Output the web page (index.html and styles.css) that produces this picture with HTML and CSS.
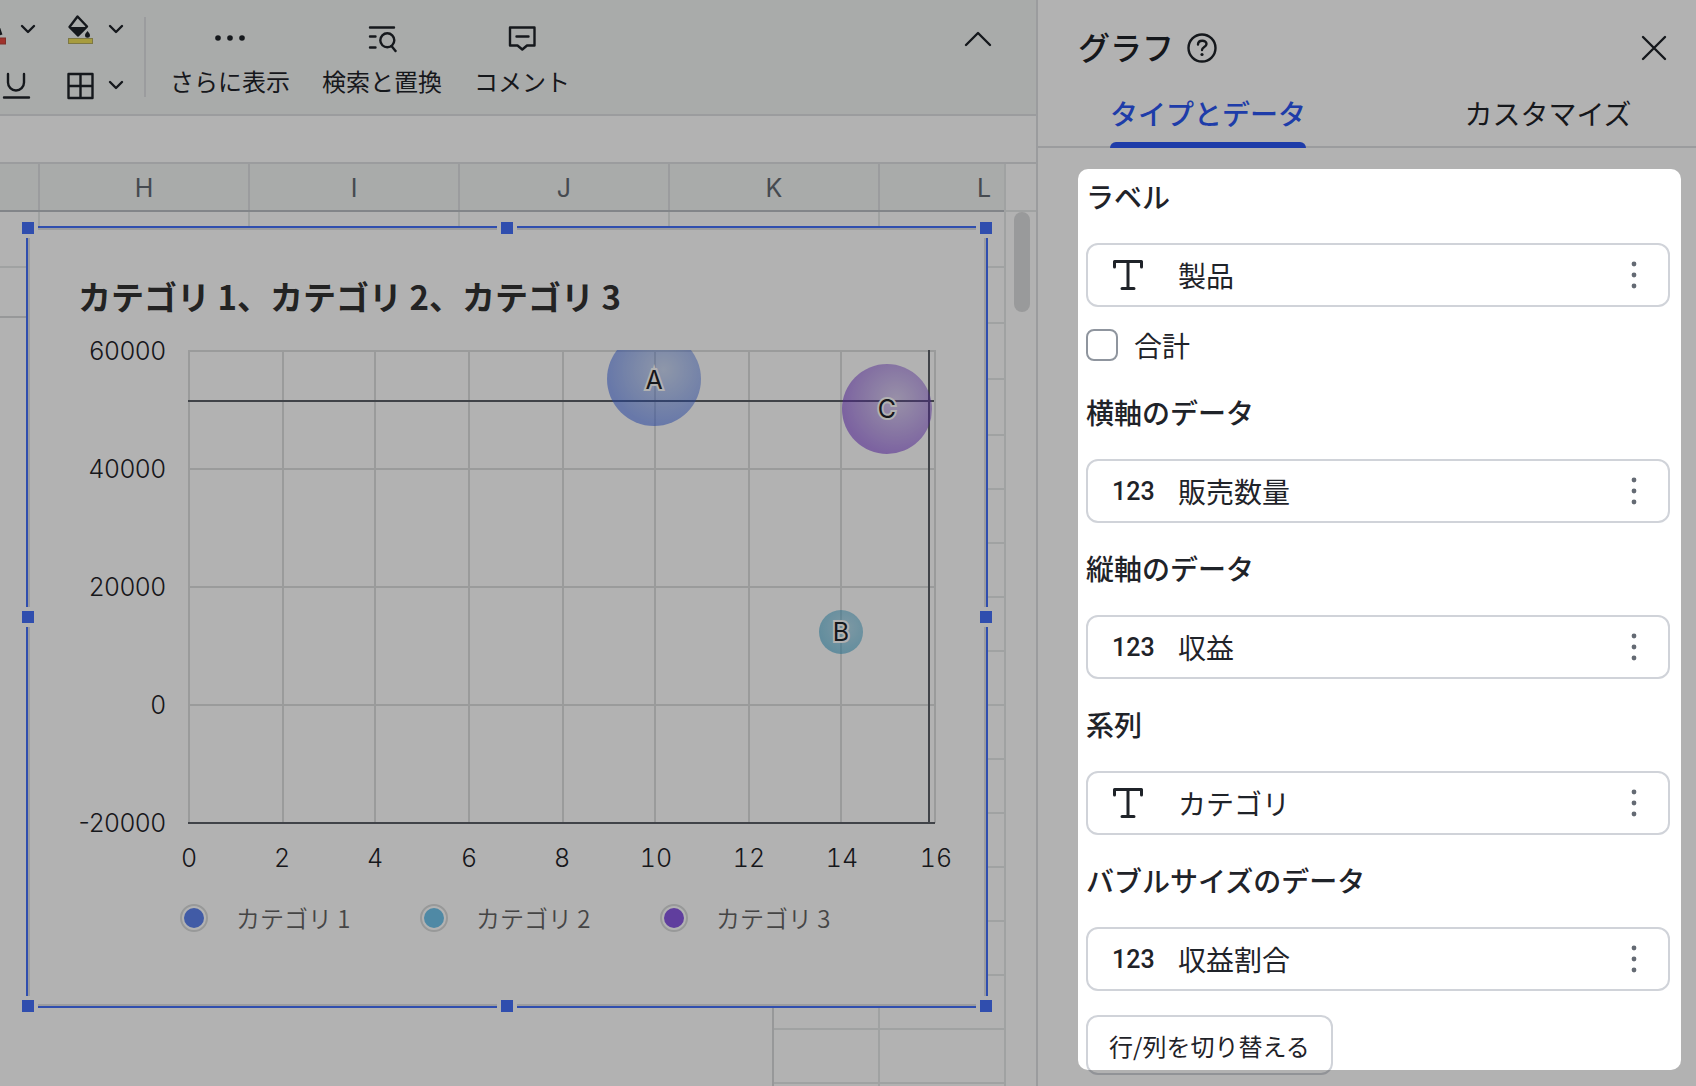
FILE: index.html
```html
<!DOCTYPE html>
<html lang="ja">
<head>
  <meta charset="UTF-8" />
  <meta name="viewport" content="width=device-width, initial-scale=1" />
  <title>グラフ</title>
  <link rel="stylesheet" href="styles.css">
</head>
<body>
  <div class="app">
    <main class="workspace">
      <div class="toolbar">
        <div class="tool-grid">
          <button class="tool" aria-label="文字の色">
            <svg width="10" height="32" viewBox="0 0 10 32"><path d="M-5 4 1 22" fill="none" stroke="#1f2329" stroke-width="3"/><rect x="-10" y="25" width="15.500" height="6" fill="#e5483f" stroke="#b5443c"/></svg>
          </button>
          <button class="tool" aria-label="文字の色を選択">
            <svg width="16" height="16" viewBox="0 0 16 16"><path d="m2 5 6 6 6-6" class="line"/></svg>
          </button>
          <button class="tool" aria-label="塗りつぶし">
            <svg width="32" height="32" viewBox="0 0 32 32"><path d="M13.500 3.500 23 13.500 14 22.500 5.500 14z" class="line"/><path d="M5 14h18.500L14 23.500z" fill="#1f2329"/><path d="M23.500 18c1.800 2.400 2.500 3.200 2.500 4.200a2.500 2.500 0 0 1-5 0c0-1 .700-1.800 2.500-4.200z" fill="#1f2329"/><rect x="4.500" y="25.500" width="24" height="5" fill="#f0e05a" stroke="#b3ac62"/></svg>
          </button>
          <button class="tool" aria-label="塗りつぶしの色を選択">
            <svg width="16" height="16" viewBox="0 0 16 16"><path d="m2 5 6 6 6-6" class="line"/></svg>
          </button>
          <button class="tool underline" aria-label="下線">
            <svg width="32" height="32" viewBox="0 0 32 32"><path d="M8 5v8.500a8 8 0 0 0 16 0V5M4 28.500h25" class="line"/></svg>
          </button>
          <button class="tool" aria-label="枠線">
            <svg width="32" height="32" viewBox="0 0 32 32"><path d="M4.500 5h24v24h-24zM16.500 5v24M4.500 17h24" class="line"/></svg>
          </button>
          <button class="tool" aria-label="枠線を選択">
            <svg width="16" height="16" viewBox="0 0 16 16"><path d="m2 5 6 6 6-6" class="line"/></svg>
          </button>
        </div>
        <span class="divider"></span>
        <button class="tool-item">
          <svg width="32" height="32" viewBox="0 0 32 32" fill="#1f2329"><circle cx="4" cy="17" r="2.800"/><circle cx="16" cy="17" r="2.800"/><circle cx="28" cy="17" r="2.800"/></svg>
          さらに表示
        </button>
        <button class="tool-item">
          <svg width="32" height="32" viewBox="0 0 32 32"><path d="M4 6.500h24M4 15.500h5.500M4 26.500h5.500" class="line"/><circle cx="21.300" cy="19.300" r="7" class="line"/><path d="m25.500 25 4 5" class="line"/></svg>
          検索と置換
        </button>
        <button class="tool-item">
          <svg width="32" height="32" viewBox="0 0 32 32"><path d="M4 6.500h24.500v18H21l-4.700 4-4.800-4H4zM10.500 15.500h12" class="line"/></svg>
          コメント
        </button>
        <button class="tool collapse" aria-label="折りたたむ">
          <svg width="32" height="32" viewBox="0 0 32 32"><path d="m4 23 12-12 12 12" class="line"/></svg>
        </button>
      </div>

      <div class="formula-bar"></div>

      <div class="sheet">
        <div class="sheet-main">
          <div class="columns">
            <span class="column-first"></span>
            <span>H</span>
            <span>I</span>
            <span>J</span>
            <span>K</span>
            <span>L</span>
          </div>
          <div class="cells">
            <svg class="grid-lines" width="100%" height="100%">
              <path d="M39 0v20M249 0v20M459 0v20M669 0v20M879 0v20M879 790v100M0 55h30M980 55h24M980 111h24M980 167h24M980 223h24M980 277h24M980 331h24M980 385h24M980 439h24M980 493h24M980 547h24M980 601h24M980 655h24M980 709h24M980 763h24M773 817h231M773 871h231"/>
              <path d="M0 105h30M773 790v100" class="dark"/>
            </svg>

            <section class="chart">
              <h2>カテゴリ 1、カテゴリ 2、カテゴリ 3</h2>
              <svg class="plot" viewBox="0 0 958 530" role="img" aria-label="バブルチャート">
                <defs>
                  <radialGradient id="blue" cx="0.6" cy="0.4" r="0.6"><stop offset="0" stop-color="#3366d2" stop-opacity="0.25"/><stop offset="1" stop-color="#3360e6" stop-opacity="0.52"/></radialGradient>
                  <radialGradient id="teal" cx="0.6" cy="0.4" r="0.6"><stop offset="0" stop-color="#46a5cd" stop-opacity="0.4"/><stop offset="1" stop-color="#3ca5cd" stop-opacity="0.58"/></radialGradient>
                  <radialGradient id="purple" cx="0.6" cy="0.4" r="0.6"><stop offset="0" stop-color="#6e41c8" stop-opacity="0.25"/><stop offset="1" stop-color="#7332d2" stop-opacity="0.55"/></radialGradient>
                  <clipPath id="plot-area"><rect x="160" y="20" width="748" height="474"/></clipPath>
                </defs>
                <path class="grid" d="M160 21h748M160 139h748M160 257h748M160 375h748M161 20v473M255 20v473M347 20v473M441 20v473M535 20v473M627 20v473M721 20v473M813 20v473M907 20v473"/>
                <path class="axis" d="M160 71h746M901 20v473M160 493h747"/>
                <g clip-path="url(#plot-area)">
                  <circle cx="626" cy="49" r="47" fill="url(#blue)"/>
                  <circle cx="859" cy="79" r="45" fill="url(#purple)"/>
                  <circle cx="813" cy="302" r="22" fill="url(#teal)"/>
                </g>
                <g class="bubble-label">
                  <text x="626" y="59">A</text>
                  <text x="859" y="88">C</text>
                  <text x="813" y="311">B</text>
                </g>
                <g class="y-label">
                  <text x="138" y="30">60000</text>
                  <text x="138" y="148">40000</text>
                  <text x="138" y="266">20000</text>
                  <text x="138" y="384">0</text>
                  <text x="138" y="502">-20000</text>
                </g>
                <g class="x-label">
                  <text x="161" y="537">0</text>
                  <text x="254" y="537">2</text>
                  <text x="347" y="537">4</text>
                  <text x="441" y="537">6</text>
                  <text x="534" y="537">8</text>
                  <text x="628" y="537">10</text>
                  <text x="721" y="537">12</text>
                  <text x="814" y="537">14</text>
                  <text x="908" y="537">16</text>
                </g>
              </svg>
              <ul class="legend">
                <li><span class="marker blue"></span>カテゴリ 1</li>
                <li><span class="marker teal"></span>カテゴリ 2</li>
                <li><span class="marker purple"></span>カテゴリ 3</li>
              </ul>
              <i class="handle top left"></i>
              <i class="handle top center"></i>
              <i class="handle top right"></i>
              <i class="handle middle left"></i>
              <i class="handle middle right"></i>
              <i class="handle bottom left"></i>
              <i class="handle bottom center"></i>
              <i class="handle bottom right"></i>
            </section>
          </div>
        </div>
        <div class="scrollbar">
          <div class="scroll-corner"></div>
          <div class="thumb"></div>
        </div>
      </div>
    </main>

    <aside class="panel">
      <header class="panel-header">
        <h1>グラフ</h1>
        <button class="tool" aria-label="ヘルプ">
          <svg width="32" height="32" viewBox="0 0 32 32"><circle cx="16" cy="16" r="13.500" class="line"/><path d="M12 12.500c0-5 8.500-5 8.500-.5 0 3-4.500 3-4.500 6" class="line"/><circle cx="16" cy="22.500" r="1.600" fill="#1f2329"/></svg>
        </button>
        <button class="tool close" aria-label="閉じる">
          <svg width="32" height="32" viewBox="0 0 32 32"><path d="m5 5 22 22M27 5 5 27" class="line"/></svg>
        </button>
      </header>
      <nav class="tabs">
        <button class="tab active">タイプとデータ</button>
        <button class="tab">カスタマイズ</button>
      </nav>

      <div class="fields">
        <section class="field">
          <h3>ラベル</h3>
          <button class="picker">
            <span class="type"><svg width="32" height="32" viewBox="0 0 32 32"><path d="M2.500 8V2.500h27V8M16 2.500v27M10 29.500h12" class="line thick"/></svg></span>
            <span class="name">製品</span>
            <svg class="more" width="8" height="32" viewBox="0 0 8 32"><circle cx="4" cy="5" r="2.400"/><circle cx="4" cy="16" r="2.400"/><circle cx="4" cy="27" r="2.400"/></svg>
          </button>
          <label class="check"><input type="checkbox" />合計</label>
        </section>
        <section class="field">
          <h3>横軸のデータ</h3>
          <button class="picker">
            <span class="type">123</span>
            <span class="name">販売数量</span>
            <svg class="more" width="8" height="32" viewBox="0 0 8 32"><circle cx="4" cy="5" r="2.400"/><circle cx="4" cy="16" r="2.400"/><circle cx="4" cy="27" r="2.400"/></svg>
          </button>
        </section>
        <section class="field">
          <h3>縦軸のデータ</h3>
          <button class="picker">
            <span class="type">123</span>
            <span class="name">収益</span>
            <svg class="more" width="8" height="32" viewBox="0 0 8 32"><circle cx="4" cy="5" r="2.400"/><circle cx="4" cy="16" r="2.400"/><circle cx="4" cy="27" r="2.400"/></svg>
          </button>
        </section>
        <section class="field">
          <h3>系列</h3>
          <button class="picker">
            <span class="type"><svg width="32" height="32" viewBox="0 0 32 32"><path d="M2.500 8V2.500h27V8M16 2.500v27M10 29.500h12" class="line thick"/></svg></span>
            <span class="name">カテゴリ</span>
            <svg class="more" width="8" height="32" viewBox="0 0 8 32"><circle cx="4" cy="5" r="2.400"/><circle cx="4" cy="16" r="2.400"/><circle cx="4" cy="27" r="2.400"/></svg>
          </button>
        </section>
        <section class="field">
          <h3>バブルサイズのデータ</h3>
          <button class="picker">
            <span class="type">123</span>
            <span class="name">収益割合</span>
            <svg class="more" width="8" height="32" viewBox="0 0 8 32"><circle cx="4" cy="5" r="2.400"/><circle cx="4" cy="16" r="2.400"/><circle cx="4" cy="27" r="2.400"/></svg>
          </button>
        </section>
        <button class="switch">行/列を切り替える</button>
      </div>

      <div class="spotlight"></div>
    </aside>
  </div>
</body>
</html>
```

FILE: styles.css
```css
* {
  box-sizing: border-box;
}

body {
  margin: 0;
  font-family: "Noto Sans CJK JP", sans-serif;
  color: #1f2329;
  background: #fff;
}

h1,
h2,
h3 {
  margin: 0;
}

button {
  font-family: inherit;
  color: inherit;
  background: none;
  border: none;
  padding: 0;
  margin: 0;
}

svg {
  display: block;
  flex: none;
}

.line {
  fill: none;
  stroke: #1f2329;
  stroke-width: 2.4;
  stroke-linecap: round;
  stroke-linejoin: round;
}

.thick {
  stroke-width: 3;
}

.app {
  display: flex;
  height: 100vh;
  overflow: hidden;
}

.workspace {
  flex: 1;
  min-width: 0;
  display: flex;
  flex-direction: column;
}

/* toolbar */
.toolbar {
  flex: none;
  display: flex;
  align-items: center;
  gap: 32px;
  height: 116px;
  padding-right: 42px;
  background: #f2f5f4;
  border-bottom: 2px solid #dee0e3;
}

.tool-grid {
  display: grid;
  grid-template-columns: 20px 44px 44px 16px;
  grid-template-rows: 32px 32px;
  row-gap: 24px;
  align-items: center;
}

.tool {
  display: flex;
}

.underline {
  grid-column: span 2;
}

.divider {
  width: 2px;
  height: 80px;
  margin: 0 -8px 0 -12px;
  background: #dee0e3;
}

.tool-item {
  display: flex;
  flex-direction: column;
  align-items: center;
  gap: 12px;
  padding-top: 4px;
  font-size: 24px;
  line-height: 32px;
  white-space: nowrap;
}

.collapse {
  align-self: flex-start;
  margin: 22px 0 0 auto;
}

.formula-bar {
  flex: none;
  height: 48px;
  border-bottom: 2px solid #dee0e3;
}

/* sheet */
.sheet {
  flex: 1;
  min-height: 0;
  display: flex;
}

.sheet-main {
  flex: 1;
  min-width: 0;
  display: flex;
  flex-direction: column;
  overflow: hidden;
}

.columns {
  flex: none;
  display: flex;
  height: 48px;
  background: #f2f5f4;
  border-bottom: 2px solid #bbbfc4;
  font-family: Inter, sans-serif;
  font-size: 25px;
  line-height: 48px;
  color: #646a73;
  text-align: center;
}

.columns span {
  flex: 0 0 210px;
  border-right: 2px solid #dee0e3;
}

.columns .column-first {
  flex-basis: 40px;
}

.cells {
  flex: 1;
  min-height: 0;
  position: relative;
}

.grid-lines {
  position: absolute;
  inset: 0;
  fill: none;
  stroke: #e6e8e8;
  stroke-width: 2;
}

.grid-lines .dark {
  stroke: #d8dadc;
}

.scrollbar {
  flex: 0 0 32px;
  border-left: 2px solid #e6e8e8;
}

.scroll-corner {
  height: 48px;
  border-bottom: 2px solid #e6e8e8;
}

.thumb {
  width: 16px;
  height: 100px;
  margin-left: 8px;
  border-radius: 8px;
  background: #dcddde;
}

/* floating chart */
.chart {
  position: absolute;
  top: 14px;
  left: 26px;
  right: 16px;
  height: 782px;
  padding-top: 46px;
  background: #fff;
  border: 2px solid #4570fa;
  box-shadow: inset 0 0 0 2px #dee0e3;
}

.chart h2 {
  margin-bottom: 12px;
  padding-left: 50px;
  font-size: 33px;
  line-height: 44px;
  font-weight: 700;
  color: #333;
}

.plot {
  width: 100%;
  overflow: visible;
  font-family: Inter, sans-serif;
  font-size: 25px;
}

.grid {
  fill: none;
  stroke: #82868a;
  stroke-opacity: 0.27;
  stroke-width: 2;
}

.axis {
  fill: none;
  stroke: #5c6068;
  stroke-width: 2;
}

.x-label,
.y-label {
  font-weight: 300;
  fill: #1f2329;
}

.y-label {
  text-anchor: end;
}

.x-label {
  text-anchor: middle;
  font-feature-settings: "tnum";
}

.bubble-label {
  text-anchor: middle;
  fill: #1f2329;
  stroke: #fff;
  stroke-width: 4;
  paint-order: stroke;
}

.legend {
  display: flex;
  list-style: none;
  margin: 42px 0 0;
  padding: 0 0 0 152px;
  font-size: 24px;
  line-height: 32px;
  font-weight: 350;
  color: #646464;
}

.legend li {
  display: flex;
  align-items: center;
  gap: 28px;
  width: 240px;
}

.marker {
  width: 28px;
  height: 28px;
  border: 2px solid #dadcdc;
  border-radius: 50%;
  padding: 2px;
  background-clip: content-box;
}

.marker.blue {
  background-color: #5e83ee;
}

.marker.teal {
  background-color: #71c5ed;
}

.marker.purple {
  background-color: #8a5ae3;
}

.handle {
  position: absolute;
  width: 20px;
  height: 20px;
  background: #4570fa;
  border: 4px solid #fff;
}

.handle.top { top: -10px; }
.handle.middle { top: calc(50% - 10px); }
.handle.bottom { bottom: -10px; }
.handle.left { left: -10px; }
.handle.center { left: calc(50% - 10px); }
.handle.right { right: -10px; }

/* side panel */
.panel {
  flex: 0 0 660px;
  position: relative;
  border-left: 2px solid #dee0e3;
}

.panel-header {
  display: flex;
  align-items: center;
  gap: 12px;
  height: 84px;
  padding: 12px 26px 0 40px;
}

.panel-header h1 {
  padding-bottom: 4px;
  font-size: 32px;
  line-height: 48px;
  font-weight: 500;
}

.close {
  margin-left: auto;
}

.tabs {
  display: flex;
  height: 64px;
  margin-right: -22px;
  border-bottom: 2px solid #dee0e3;
}

.tab {
  flex: 1;
  position: relative;
  padding-bottom: 4px;
  font-size: 28px;
}

.tab.active {
  color: #2c57f2;
  font-weight: 500;
}

.tab.active::after {
  content: "";
  position: absolute;
  left: 50%;
  bottom: -2px;
  width: 196px;
  height: 6px;
  margin-left: -98px;
  border-radius: 6px 6px 0 0;
  background: #2c57f2;
}

.fields {
  display: flex;
  flex-direction: column;
  align-items: flex-start;
  padding: 27px 26px 0 48px;
}

.field {
  width: 100%;
  margin-bottom: 24px;
}

.field h3 {
  margin-bottom: 26px;
  font-size: 28px;
  line-height: 42px;
  font-weight: 500;
}

.picker {
  display: flex;
  align-items: center;
  width: 100%;
  height: 64px;
  padding: 0 30px 0 24px;
  border: 2px solid #d0d3d9;
  border-radius: 12px;
  font-size: 28px;
  text-align: left;
}

.type {
  width: 66px;
  font-family: Roboto, sans-serif;
  font-size: 25px;
  font-weight: 500;
}

.name {
  flex: 1;
}

.more {
  fill: #646a73;
}

.check {
  display: flex;
  align-items: center;
  gap: 16px;
  margin: 22px 0 30px;
  font-size: 28px;
  line-height: 32px;
}

/* the next heading follows the tick box directly */
.field:has(.check) {
  margin-bottom: 0;
}

.check input {
  appearance: none;
  width: 32px;
  height: 32px;
  margin: 0;
  border: 2px solid #8f959e;
  border-radius: 8px;
  background: #fff;
}

.switch {
  height: 60px;
  padding: 0 21px;
  border: 2px solid #d0d3d9;
  border-radius: 12px;
  font-size: 24px;
}

/* dims everything except the data settings */
.spotlight {
  position: absolute;
  top: 169px;
  left: 40px;
  right: 15px;
  bottom: 16px;
  border-radius: 10px;
  box-shadow: 0 0 0 9999px rgba(0, 0, 0, 0.3);
  pointer-events: none;
}
```
